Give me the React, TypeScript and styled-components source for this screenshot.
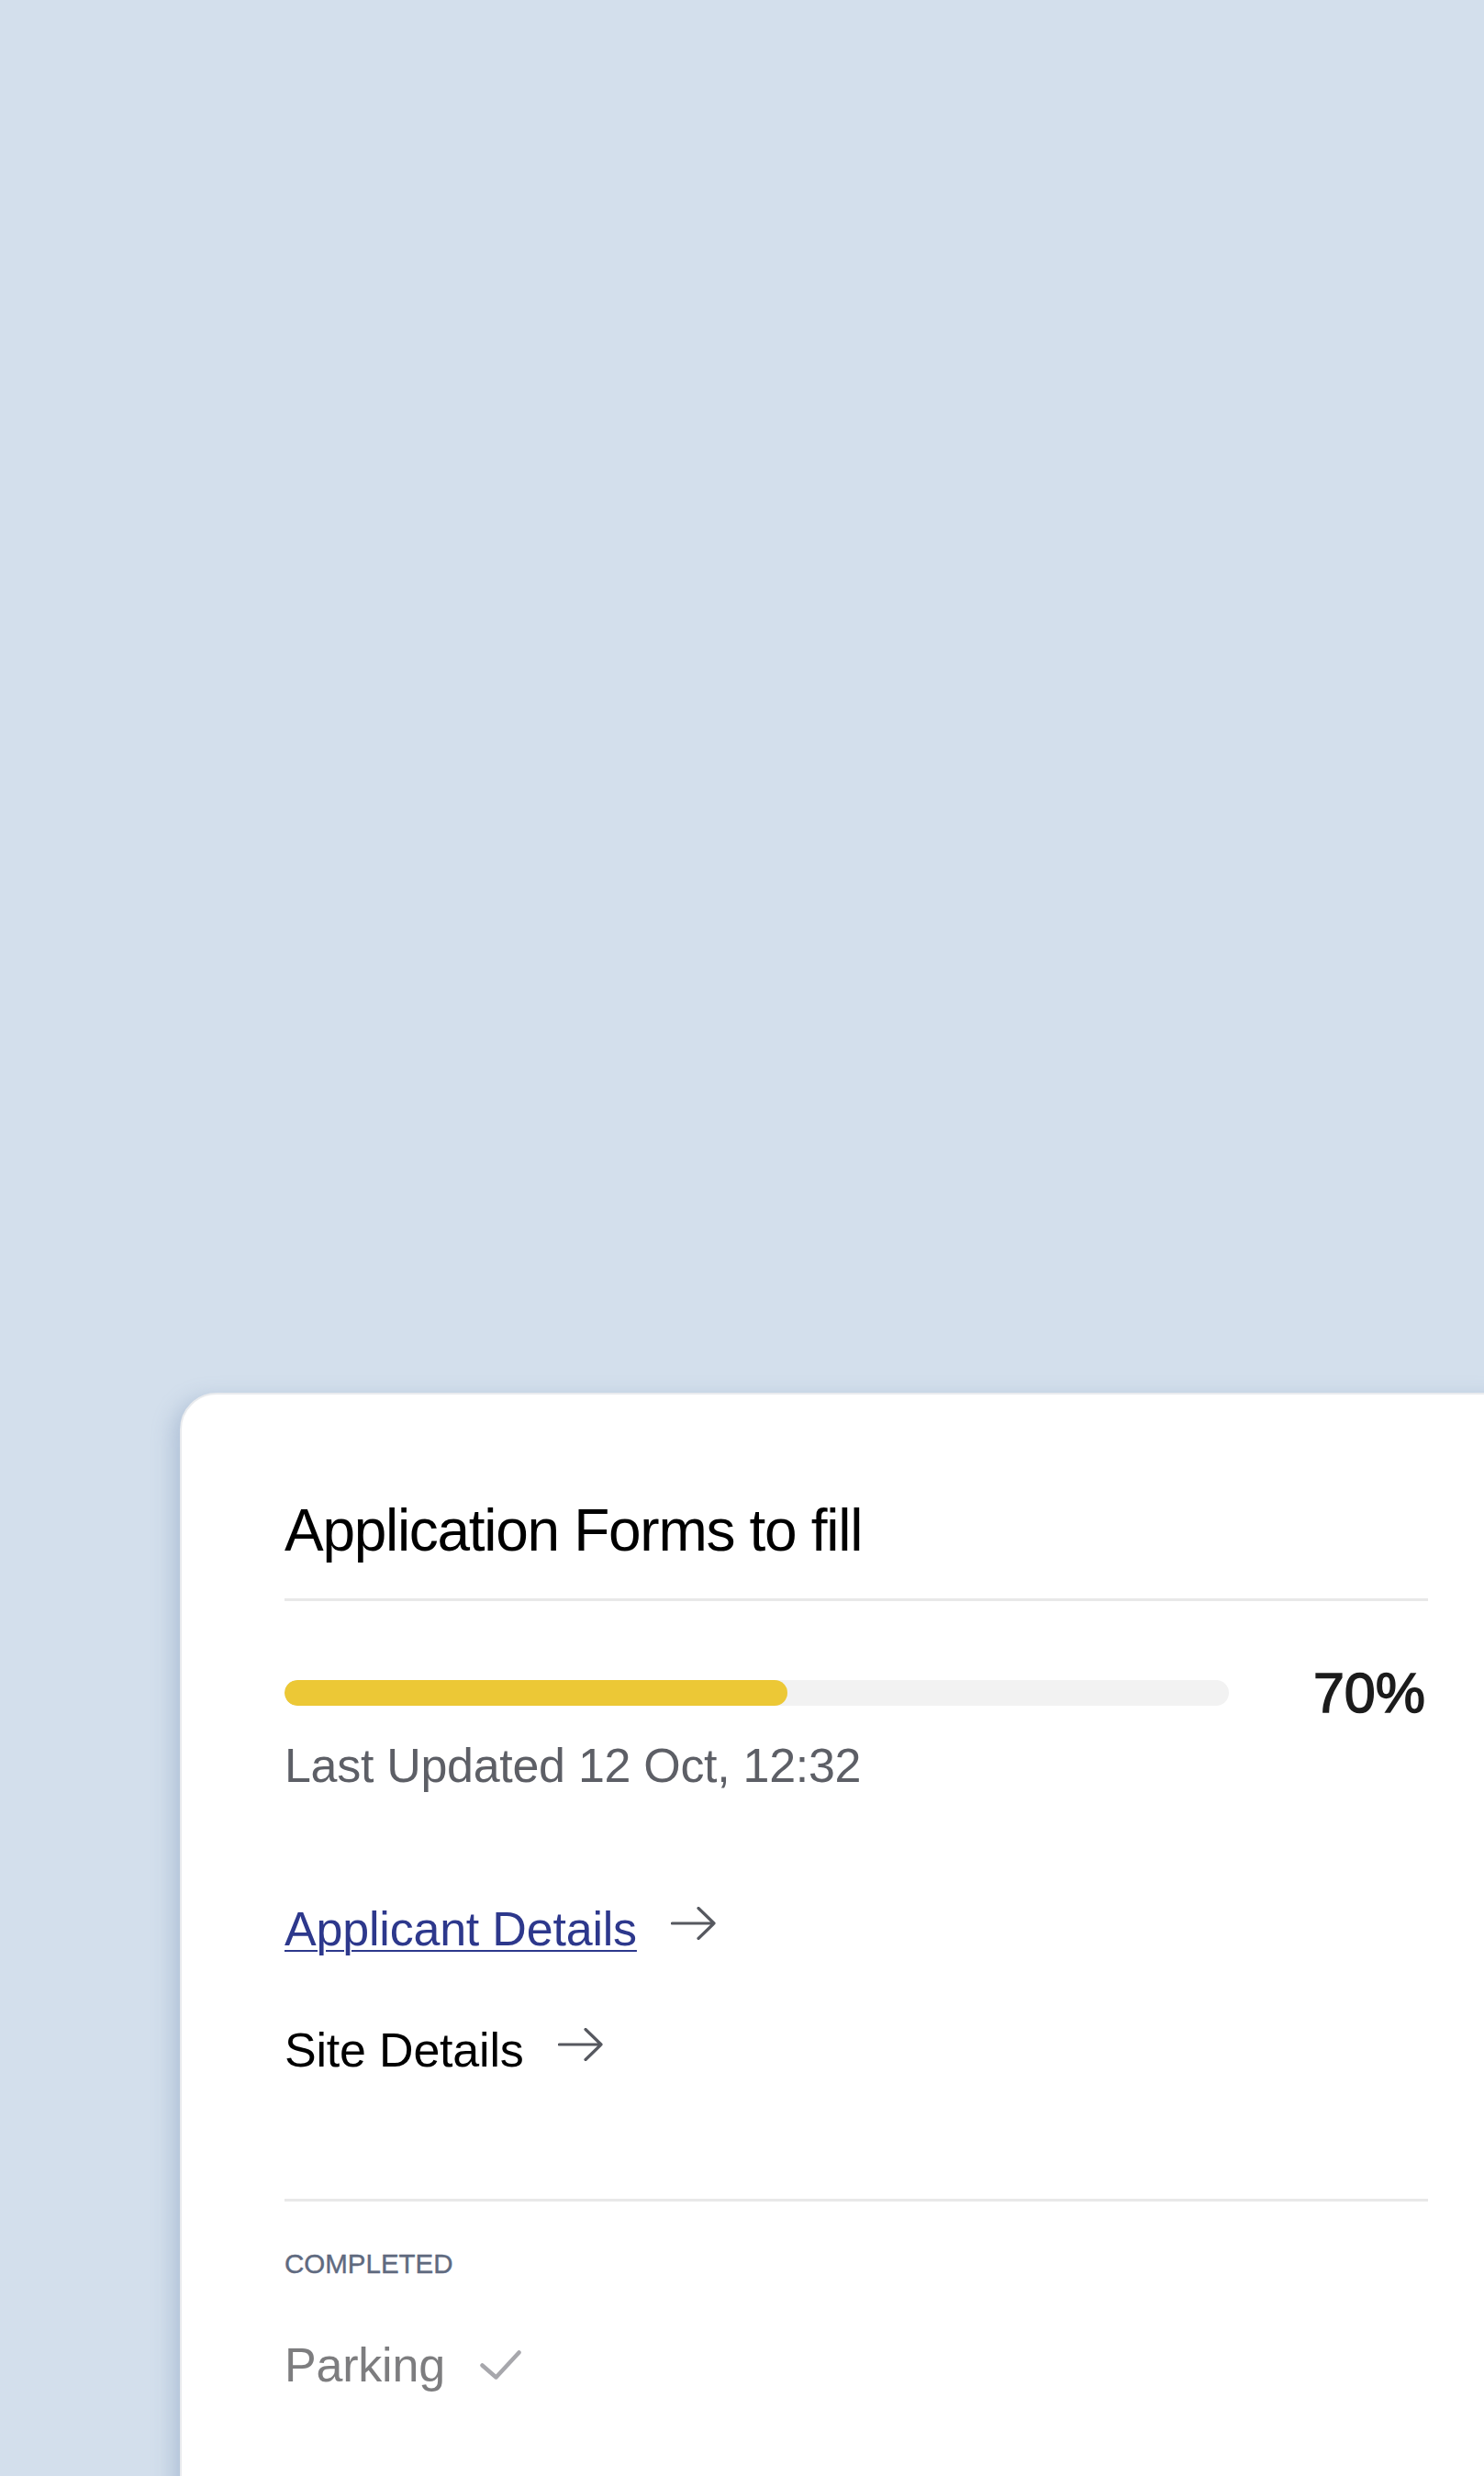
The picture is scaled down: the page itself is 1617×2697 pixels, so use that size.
import React from "react";
import styled, { createGlobalStyle } from "styled-components";

const GlobalStyle = createGlobalStyle`
  html, body {
    margin: 0;
    padding: 0;
    height: 100%;
    overflow: hidden;
    background: #d3dfec;
  }
  body {
    font-family: "Liberation Sans", Arial, sans-serif;
  }
`;

const Page = styled.div`
  min-height: 2697px;
  box-sizing: border-box;
  padding: 1517px 0 0 196px;
  display: flex;
  align-items: flex-start;
`;

const Card = styled.section`
  box-sizing: border-box;
  width: 1474px;
  min-height: 1400px;
  flex-shrink: 0;
  background: #ffffff;
  border: 2px solid #e9ebee;
  border-radius: 40px;
  box-shadow: -8px 6px 22px rgba(120, 148, 184, 0.38);
  padding: 118px 112px 80px 112px;
  display: flex;
  flex-direction: column;
`;

const Title = styled.h2`
  margin: 0;
  font-size: 64px;
  line-height: 60px;
  font-weight: 400;
  color: #000;
  letter-spacing: -1.3px;
`;

const Divider = styled.hr<{ $gap: number }>`
  margin: ${(p) => p.$gap}px 0 0 0;
  border: none;
  height: 3px;
  background: #e8e8e8;
  width: 100%;
`;

const ProgressRow = styled.div`
  margin-top: 70px;
  display: grid;
  grid-template-columns: 1fr auto;
  align-items: center;
  column-gap: 92px;
  height: 60px;
`;

const Track = styled.div`
  height: 28px;
  border-radius: 14px;
  background: #f2f2f2;
  overflow: hidden;
`;

const Fill = styled.div`
  height: 100%;
  border-radius: 14px;
  background: #ecc836;
`;

const Percent = styled.span`
  font-size: 61px;
  line-height: 60px;
  color: #1c1c1c;
  -webkit-text-stroke: 1.5px #1c1c1c;
  margin-right: 3px;
`;

const Updated = styled.p`
  margin: 23px 0 0 0;
  font-size: 52px;
  line-height: 52px;
  color: #5d5f66;
  letter-spacing: -0.3px;
`;

const FormRow = styled.div<{ $gap: number }>`
  margin-top: ${(p) => p.$gap}px;
  display: flex;
  align-items: center;
  gap: 37px;
`;

const FormLink = styled.a<{ $active?: boolean }>`
  font-size: 52px;
  line-height: 52px;
  letter-spacing: -0.2px;
  color: ${(p) => (p.$active ? "#2d388c" : "#000")};
  text-decoration: ${(p) => (p.$active ? "underline" : "none")};
  text-decoration-thickness: 2px;
  text-underline-offset: 5px;
  cursor: pointer;
`;

const ArrowIcon = styled.svg`
  width: 49px;
  height: 36px;
  margin-bottom: 13px;
  flex-shrink: 0;
`;

const SectionLabel = styled.div`
  margin-top: 53px;
  font-size: 29.5px;
  line-height: 29px;
  color: #5f6a7f;
  -webkit-text-stroke: 0.4px #5f6a7f;
`;

const DoneRow = styled.div`
  margin-top: 70px;
  display: flex;
  align-items: center;
  gap: 38px;
`;

const DoneText = styled.span`
  font-size: 52px;
  line-height: 52px;
  letter-spacing: -0.2px;
  color: #7d7d7f;
`;

const CheckIcon = styled.svg`
  width: 45px;
  height: 32px;
  flex-shrink: 0;
`;

const Arrow = () => (
  <ArrowIcon viewBox="0 0 49 36" fill="none">
    <path
      d="M1.5 18 H47 M30 1.5 L47 18 L30 34.5"
      stroke="#56585f"
      strokeWidth="3.2"
      strokeLinecap="round"
      strokeLinejoin="round"
    />
  </ArrowIcon>
);

const Check = () => (
  <CheckIcon viewBox="0 0 45 32" fill="none">
    <path
      d="M2.5 16.5 L17.5 29.5 L42.5 2.5"
      stroke="#a7a7ac"
      strokeWidth="4.5"
      strokeLinecap="round"
      strokeLinejoin="round"
    />
  </CheckIcon>
);

const forms = [
  { name: "Applicant Details", active: true, gap: 126 },
  { name: "Site Details", active: false, gap: 80 },
];

export default function App() {
  const progress = 53.3;
  return (
    <>
      <GlobalStyle />
      <Page>
        <Card>
          <Title>Application Forms to fill</Title>
          <Divider $gap={44} />
          <ProgressRow>
            <Track>
              <Fill style={{ width: `${progress}%` }} />
            </Track>
            <Percent>70%</Percent>
          </ProgressRow>
          <Updated>Last Updated 12 Oct, 12:32</Updated>
          {forms.map((f) => (
            <FormRow key={f.name} $gap={f.gap}>
              <FormLink $active={f.active}>{f.name}</FormLink>
              <Arrow />
            </FormRow>
          ))}
          <Divider $gap={136} />
          <SectionLabel>COMPLETED</SectionLabel>
          <DoneRow>
            <DoneText>Parking</DoneText>
            <Check />
          </DoneRow>
        </Card>
      </Page>
    </>
  );
}
